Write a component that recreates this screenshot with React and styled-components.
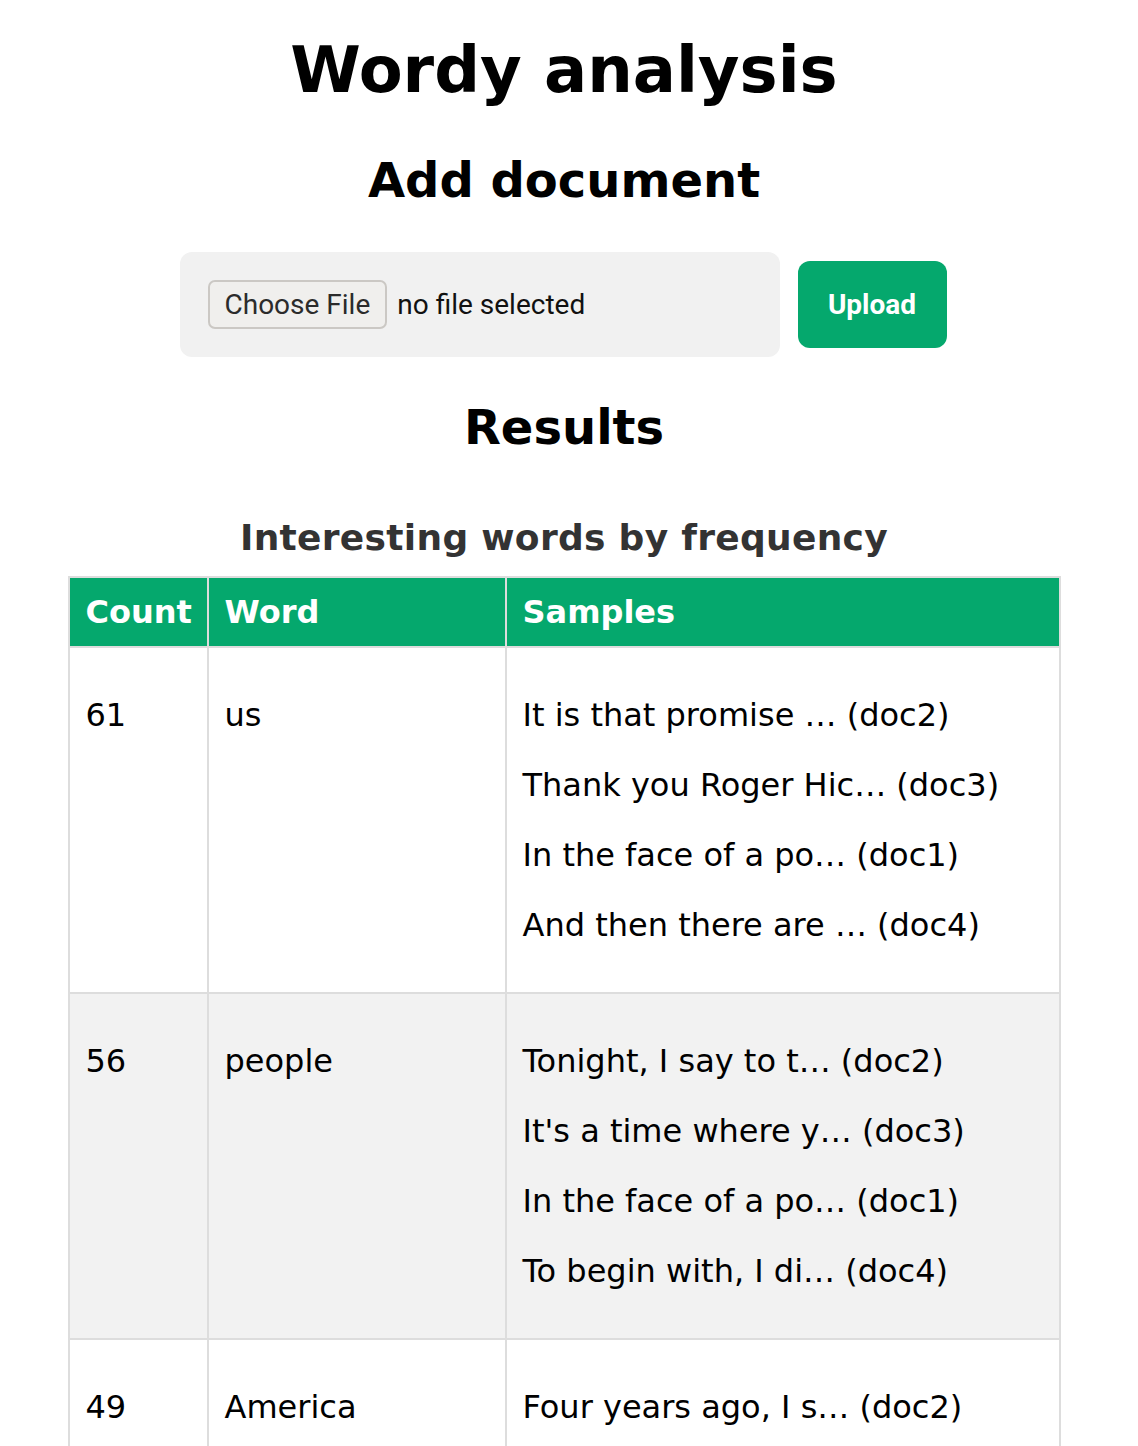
import React from 'react';
import styled, { createGlobalStyle } from 'styled-components';

const GlobalStyle = createGlobalStyle`
  html, body {
    margin: 0;
    padding: 0;
    background: #fff;
  }
  body {
    font-family: "DejaVu Sans", sans-serif;
    color: #000;
  }
`;

const Page = styled.main`
  width: 1128px;
  padding-top: 33px;
  display: flex;
  flex-direction: column;
  align-items: center;
  text-align: center;
`;

const Title = styled.h1`
  margin: 0;
  font-size: 64px;
  line-height: 75px;
  font-weight: bold;
`;

const Heading = styled.h2`
  margin: ${(p) => p.$top}px 0 0;
  font-size: 48px;
  line-height: 56px;
  font-weight: bold;
`;

const UploadRow = styled.form`
  margin-top: 44px;
  margin-left: -2px;
  display: flex;
  align-items: center;
  gap: 18px;
`;

const FileBox = styled.div`
  width: 600px;
  box-sizing: border-box;
  padding: 28px;
  background: #f1f1f1;
  border-radius: 12px;
  display: flex;
  align-items: center;
  gap: 10px;
  font-family: Roboto, "Noto Sans", sans-serif;
  font-size: 28px;
`;

const ChooseButton = styled.button`
  height: 49px;
  padding: 0 15px;
  border: 2px solid #cbc8c4;
  border-radius: 7px;
  background: #f0efed;
  color: #2b2b2b;
  font: inherit;
  cursor: pointer;
`;

const FileName = styled.span`
  color: #111;
`;

const UploadButton = styled.button`
  width: 149px;
  height: 87px;
  border: none;
  border-radius: 12px;
  background: #05a86d;
  color: #fff;
  font-family: Roboto, "Noto Sans", sans-serif;
  font-size: 28px;
  font-weight: bold;
  cursor: pointer;
`;

const Table = styled.table`
  margin-top: 62px;
  width: 993px;
  border-collapse: collapse;
  table-layout: fixed;
  text-align: left;
  font-size: 32px;
`;

const Caption = styled.caption`
  padding-bottom: 17px;
  font-size: 36px;
  line-height: 42px;
  font-weight: bold;
  color: #333;
  letter-spacing: 0.3px;
  text-align: center;
`;

const HeadCell = styled.th`
  width: ${(p) => (p.$width ? `${p.$width}px` : 'auto')};
  padding: 16px;
  background: #05a86d;
  color: #fff;
  font-weight: bold;
  line-height: 36px;
  border: 2px solid #dddddd;
  text-align: left;
`;

const Row = styled.tr`
  background: ${(p) => (p.$striped ? '#f2f2f2' : '#fff')};
`;

const Cell = styled.td`
  padding: 16px;
  border: 2px solid #dddddd;
  vertical-align: top;
  line-height: 38px;
`;

const Value = styled.p`
  margin: 32px 0;
`;

const Sample = styled.p`
  margin: 32px 0;
  white-space: nowrap;
`;

const rows = [
  {
    count: 61,
    word: 'us',
    samples: [
      'It is that promise \u2026 (doc2)',
      'Thank you Roger Hic\u2026 (doc3)',
      'In the face of a po\u2026 (doc1)',
      'And then there are \u2026 (doc4)',
    ],
  },
  {
    count: 56,
    word: 'people',
    samples: [
      'Tonight, I say to t\u2026 (doc2)',
      "It's a time where y\u2026 (doc3)",
      'In the face of a po\u2026 (doc1)',
      'To begin with, I di\u2026 (doc4)',
    ],
  },
  {
    count: 49,
    word: 'America',
    samples: [
      'Four years ago, I s\u2026 (doc2)',
      'We are here tonigh\u2026 (doc3)',
      'This is the moment\u2026 (doc1)',
      'So let me be clear\u2026 (doc4)',
    ],
  },
];

export default function App() {
  return (
    <>
      <GlobalStyle />
      <Page>
        <Title>Wordy analysis</Title>
        <Heading $top={44}>Add document</Heading>
        <UploadRow onSubmit={(e) => e.preventDefault()}>
          <FileBox>
            <ChooseButton type="button">Choose File</ChooseButton>
            <FileName>no file selected</FileName>
          </FileBox>
          <UploadButton type="submit">Upload</UploadButton>
        </UploadRow>
        <Heading $top={42}>Results</Heading>
        <Table>
          <Caption>Interesting words by frequency</Caption>
          <thead>
            <tr>
              <HeadCell $width={105}>Count</HeadCell>
              <HeadCell $width={264}>Word</HeadCell>
              <HeadCell>Samples</HeadCell>
            </tr>
          </thead>
          <tbody>
            {rows.map((row, idx) => (
              <Row key={row.word} $striped={idx % 2 === 1}>
                <Cell>
                  <Value>{row.count}</Value>
                </Cell>
                <Cell>
                  <Value>{row.word}</Value>
                </Cell>
                <Cell>
                  {row.samples.map((s, i) => (
                    <Sample key={i}>{s}</Sample>
                  ))}
                </Cell>
              </Row>
            ))}
          </tbody>
        </Table>
      </Page>
    </>
  );
}
